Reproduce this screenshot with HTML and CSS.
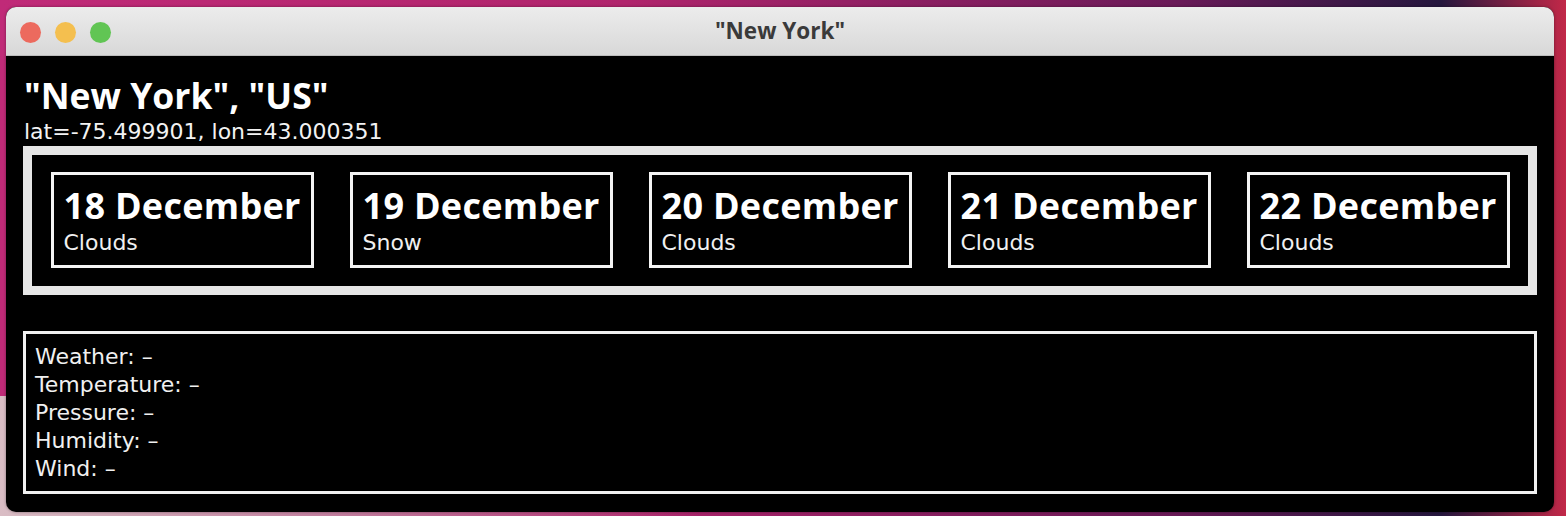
FILE: index.html
```html
<!DOCTYPE html>
<html>
<head>
<meta charset="utf-8">
<link rel="stylesheet" href="styles.css">
</head>
<body>
<div class="window">
  <div class="titlebar">
    <div class="lights">
      <span class="light red"></span>
      <span class="light yellow"></span>
      <span class="light green"></span>
    </div>
    <div class="title">"New York"</div>
  </div>
  <div class="content">
    <h1 class="city">"New York", "US"</h1>
    <div class="coords">lat=-75.499901, lon=43.000351</div>
    <div class="forecast">
      <div class="card"><div class="date">18 December</div><div class="cond">Clouds</div></div>
      <div class="card"><div class="date">19 December</div><div class="cond">Snow</div></div>
      <div class="card"><div class="date">20 December</div><div class="cond">Clouds</div></div>
      <div class="card"><div class="date">21 December</div><div class="cond">Clouds</div></div>
      <div class="card"><div class="date">22 December</div><div class="cond">Clouds</div></div>
    </div>
    <div class="details">
      <div class="line">Weather: –</div>
      <div class="line">Temperature: –</div>
      <div class="line">Pressure: –</div>
      <div class="line">Humidity: –</div>
      <div class="line">Wind: –</div>
    </div>
  </div>
</div>
</body>
</html>
```
FILE: styles.css
```css
html, body {
  margin: 0;
  padding: 0;
}
body {
  width: 1566px;
  height: 516px;
  box-sizing: border-box;
  padding: 7px 12px 4px 6px;
  overflow: hidden;
  background: linear-gradient(90deg, #c02a78 0%, #b0246c 40%, #6a1a58 75%, #25173e 92%, #c22848 100%);
  position: relative;
}
body::after {
  content: "";
  position: absolute;
  left: 0;
  bottom: 0;
  width: 700px;
  height: 120px;
  background: linear-gradient(90deg, rgba(220,205,205,0.9) 0%, rgba(200,180,185,0.6) 50%, rgba(200,180,185,0) 100%);
  pointer-events: none;
  z-index: 0;
}
.window {
  position: relative;
  z-index: 1;
  width: 1548px;
  height: 505px;
  border-radius: 10px;
  overflow: hidden;
  background: #000;
  display: flex;
  flex-direction: column;
  box-shadow: 0 0 3px rgba(0,0,0,0.4);
}
.titlebar {
  height: 48px;
  flex: none;
  background: linear-gradient(180deg, #ececec 0%, #d8d8d8 100%);
  border-bottom: 1px solid #bdbdbd;
  display: flex;
  align-items: center;
  justify-content: center;
  position: relative;
}
.lights {
  position: absolute;
  left: 14px;
  top: 15px;
  display: flex;
  gap: 14px;
}
.light {
  width: 21px;
  height: 21px;
  border-radius: 50%;
  display: block;
}
.red { background: #ec6a5e; }
.yellow { background: #f4bf4f; }
.green { background: #61c554; }
.title {
  font-family: "Open Sans", "DejaVu Sans", sans-serif;
  font-weight: 700;
  font-size: 22.5px;
  color: #3a3a3a;
  line-height: 24px;
  margin-top: -1px;
}
.content {
  flex: 1;
  padding: 22px 17px 0 17px;
  color: #fff;
  font-family: "DejaVu Sans", sans-serif;
}
.city {
  margin: 0 0 8px 1px;
  font-family: "Open Sans", "DejaVu Sans", sans-serif;
  font-weight: 700;
  font-size: 35.5px;
  line-height: 34px;
  color: #fff;
}
.coords {
  font-size: 22px;
  line-height: 24px;
  margin: 0 0 2px 1px;
  color: #f2f2f2;
}
.forecast {
  border: 9px solid #e6e6e6;
  padding: 17px 0 18px;
  display: flex;
  justify-content: center;
  gap: 36px;
}
.card {
  width: 263px;
  height: 96px;
  box-sizing: border-box;
  border: 3px solid #f4f4f4;
  padding: 14px 0 0 10px;
}
.date {
  font-family: "Open Sans", "DejaVu Sans", sans-serif;
  font-weight: 700;
  font-size: 36px;
  letter-spacing: 0.3px;
  line-height: 34px;
  color: #fff;
  white-space: nowrap;
}
.cond {
  font-size: 22px;
  line-height: 24px;
  margin-top: 8px;
  color: #f0f0f0;
}
.details {
  margin-top: 36px;
  height: 163px;
  box-sizing: border-box;
  border: 3px solid #f0f0f0;
  padding: 9px 9px 0;
}
.line {
  font-size: 22px;
  line-height: 28px;
  color: #f0f0f0;
}
```
